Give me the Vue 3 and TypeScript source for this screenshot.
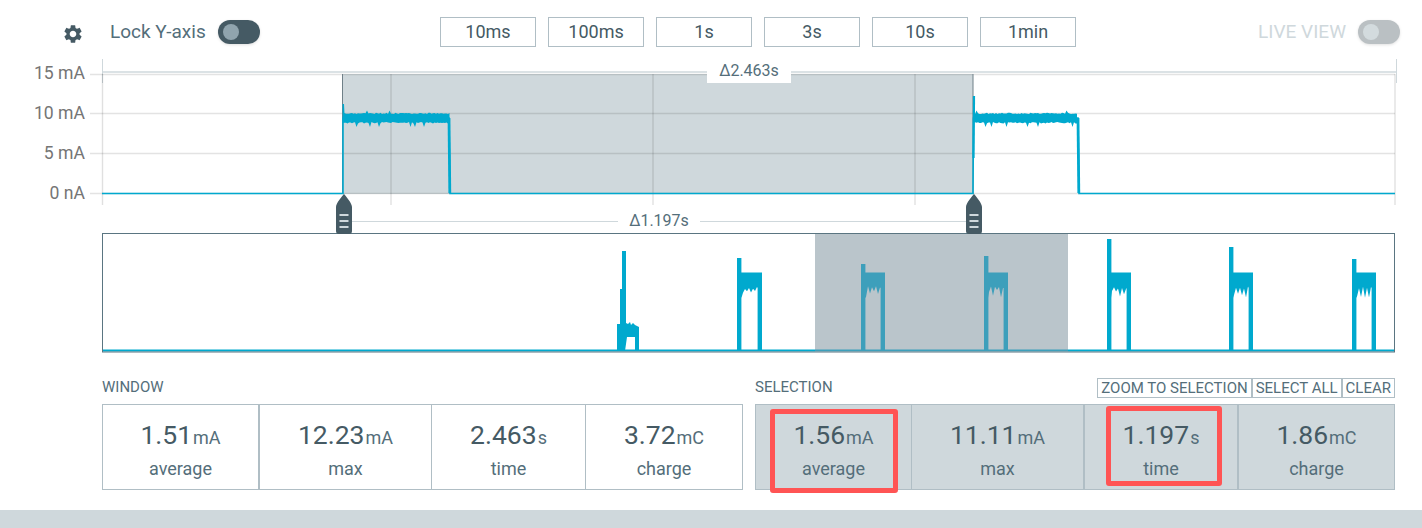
<script setup lang="ts">
interface Stat {
  value: string
  unit: string
  label: string
  thick?: boolean
  mark?: string
}

const windows = ['10ms', '100ms', '1s', '3s', '10s', '1min']

const windowStats: Stat[] = [
  { value: '1.51', unit: 'mA', label: 'average', thick: true },
  { value: '12.23', unit: 'mA', label: 'max' },
  { value: '2.463', unit: 's', label: 'time' },
  { value: '3.72', unit: 'mC', label: 'charge' },
]

const selectionStats: Stat[] = [
  { value: '1.56', unit: 'mA', label: 'average', mark: 'mark-average' },
  { value: '11.11', unit: 'mA', label: 'max', thick: true },
  { value: '1.197', unit: 's', label: 'time', thick: true, mark: 'mark-time' },
  { value: '1.86', unit: 'mC', label: 'charge' },
]

const gridY = [74.5, 113.5, 153.5, 193.5]
const gridX = [102.5, 391, 653, 915, 1395]
const axisLabels = [
  { y: 79, text: '15 mA' },
  { y: 119, text: '10 mA' },
  { y: 159, text: '5 mA' },
  { y: 199, text: '0 nA' },
]

// small seeded generator so the noise stays the same between runs
const noise = (seed: number) => {
  let s = seed
  return () => {
    s = (s * 9301 + 49297) % 233280
    return s / 233280
  }
}

const burst = (left: number, right: number, spike: number, seed: number) => {
  const rnd = noise(seed)
  const top: string[] = []
  const bottom: string[] = []
  for (let x = left + 2; x <= right; x += 1.5) {
    const up = rnd() > 0.95 ? 3.5 : rnd() * 1.2
    const down = rnd() > 0.94 ? 5 : rnd() * 1.6
    top.push(`${x},${114 - up}`)
    bottom.unshift(`${x},${122 + down}`)
  }
  return [`${left},${spike}`, `${left + 1.5},${spike}`, `${left + 2},114`, ...top, ...bottom, `${left},123`].join(' ')
}

const mainPulses = [
  { left: 342.5, right: 449.5, spike: 104, band: burst(342.5, 449.5, 104, 17) },
  { left: 973, right: 1078, spike: 96, band: burst(973, 1078, 96, 53) },
]

const miniPulse = (left: number, right: number, spike: number, seed: number) => {
  const rnd = noise(seed)
  const teeth: string[] = []
  for (let x = right - 5; x > left + 5; x -= 4) {
    teeth.push(`${x},${286 + rnd() * 3}`, `${x - 2},${289 + rnd() * 9}`)
  }
  return [
    `${left},351`, `${left},${spike}`, `${left + 4.4},${spike}`, `${left + 4.4},272.5`, `${right},272.5`,
    `${right},351`, `${right - 4.4},351`, `${right - 4.4},288`, ...teeth, `${left + 4.4},298`, `${left + 4.4},351`,
  ].join(' ')
}

const miniPulses = [
  { points: miniPulse(737, 762, 258, 3), selected: false },
  { points: miniPulse(861, 885, 264, 7), selected: true },
  { points: miniPulse(984, 1008, 256, 11), selected: true },
  { points: miniPulse(1107, 1131, 239, 19), selected: false },
  { points: miniPulse(1229, 1253, 247, 23), selected: false },
  { points: miniPulse(1352, 1376, 259, 29), selected: false },
]

const firstBurst =
  '617,351 617,324 620,324 620,289 622,289 622,251 626,251 626,323 628,324 630,322 631,325 633,323 635,325 639,327 639,351 635,351 635,337 627,337 625,351'

const handles = [344, 974]
</script>

<template>
  <div class="page">
    <div class="toolbar">
      <div class="lock">
        <svg class="gear" viewBox="0 0 24 24" width="22" height="22">
          <path fill="#455a64" d="M19.14 12.94c.04-.3.06-.61.06-.94 0-.32-.02-.64-.07-.94l2.03-1.58c.18-.14.23-.41.12-.61l-1.92-3.32c-.12-.22-.37-.29-.59-.22l-2.39.96c-.5-.38-1.03-.7-1.62-.94l-.36-2.54c-.04-.24-.24-.41-.48-.41h-3.84c-.24 0-.43.17-.47.41l-.36 2.54c-.59.24-1.13.57-1.62.94l-2.39-.96c-.22-.08-.47 0-.59.22L2.74 8.87c-.12.21-.08.47.12.61l2.03 1.58c-.05.3-.09.63-.09.94s.02.64.07.94l-2.03 1.58c-.18.14-.23.41-.12.61l1.92 3.32c.12.22.37.29.59.22l2.39-.96c.5.38 1.03.7 1.62.94l.36 2.54c.05.24.24.41.48.41h3.84c.24 0 .44-.17.47-.41l.36-2.54c.59-.24 1.13-.56 1.62-.94l2.39.96c.22.08.47 0 .59-.22l1.92-3.32c.12-.22.07-.47-.12-.61l-2.01-1.58zM12 15.6c-1.98 0-3.6-1.62-3.6-3.6s1.62-3.6 3.6-3.6 3.6 1.62 3.6 3.6-1.62 3.6-3.6 3.6z" />
        </svg>
        <span class="lock-text">Lock Y-axis</span>
        <span class="toggle"><span class="knob"></span></span>
      </div>
      <div class="windows">
        <button v-for="w in windows" :key="w" class="window-btn">{{ w }}</button>
      </div>
      <div class="live">
        <span class="live-text">LIVE VIEW</span>
        <span class="toggle off"><span class="knob"></span></span>
      </div>
    </div>

    <svg class="charts" viewBox="0 53 1422 300" width="1422" height="300">
      <!-- main chart -->
      <rect x="343" y="74" width="630" height="120" fill="#cfd8dc" />
      <line x1="102" y1="72" x2="1396" y2="72" stroke="#cfd8dc" stroke-width="1.4" />
      <line x1="102.5" y1="59" x2="102.5" y2="83" stroke="#cfd8dc" />
      <line x1="1396.5" y1="59" x2="1396.5" y2="83" stroke="#cfd8dc" />
      <line v-for="y in gridY" :key="y" x1="90" :y1="y" x2="1395" :y2="y" stroke="#000" stroke-opacity="0.11" stroke-width="1.4" />
      <line v-for="x in gridX" :key="x" :x1="x" y1="74" :x2="x" y2="205" stroke="#000" stroke-opacity="0.12" stroke-width="1.4" />
      <line x1="342.5" y1="74" x2="342.5" y2="194" stroke="#6f8088" />
      <line x1="973" y1="74" x2="973" y2="194" stroke="#6f8088" />
      <text v-for="a in axisLabels" :key="a.text" class="axis" x="85" :y="a.y" text-anchor="end">{{ a.text }}</text>

      <polyline
        points="102,193.5 343,193.5 343,118 449,118 450,193.5 973,193.5 973.5,118 1078,118 1079,193.5 1395,193.5"
        fill="none" stroke="#00a9ce" stroke-width="1.6"
      />
      <polygon v-for="p in mainPulses" :key="p.left" :points="p.band" fill="#00a9ce" />
      <line x1="449" y1="118" x2="449.8" y2="193" stroke="#00a9ce" stroke-width="2.8" />
      <line x1="1078" y1="118" x2="1078.8" y2="193" stroke="#00a9ce" stroke-width="2.8" />
      <line x1="974" y1="96" x2="973.5" y2="158" stroke="#00a9ce" stroke-width="2.2" />

      <rect x="707" y="64" width="84" height="19" fill="#fff" />
      <text class="delta" x="749" y="76" text-anchor="middle">Δ2.463s</text>

      <line x1="350" y1="221.5" x2="966" y2="221.5" stroke="#cfd8dc" />
      <rect x="618" y="212" width="82" height="19" fill="#fff" />
      <text class="delta" x="659" y="226" text-anchor="middle">Δ1.197s</text>

      <!-- overview chart -->
      <rect x="815" y="234" width="253" height="117" fill="#bac5cb" />
      <polygon :points="firstBurst" fill="#00a9ce" />
      <polyline points="103,350.5 815,350.5" stroke="#00a9ce" stroke-width="2.2" />
      <polyline points="815,350.5 1068,350.5" stroke="#3d9fbb" stroke-width="2.2" />
      <polyline points="1068,350.5 1394,350.5" stroke="#00a9ce" stroke-width="2.2" />
      <polygon
        v-for="p in miniPulses"
        :key="p.points"
        :points="p.points"
        :fill="p.selected ? '#3d9fbb' : '#00a9ce'"
      />
      <rect x="102.5" y="233.5" width="1292" height="118.5" fill="none" stroke="#5a7581" />

      <g v-for="h in handles" :key="h">
        <path
          :transform="`translate(${h} 194)`"
          fill="#455a64"
          d="M0 0 C2 2.5 8 9 8 13 V37 Q8 40 5 40 H-5 Q-8 40 -8 37 V13 C-8 9 -2 2.5 0 0Z"
        />
        <rect v-for="dy in [20, 26, 32]" :key="dy" :x="h - 4.5" :y="194 + dy" width="9" height="2" fill="#cfd8dc" />
      </g>
    </svg>

    <div class="stats">
      <section>
        <header class="stats-head"><span class="stats-title">WINDOW</span></header>
        <div class="cards cards-window">
          <div v-for="s in windowStats" :key="s.label" class="stat" :class="{ thick: s.thick }">
            <div class="stat-value">{{ s.value }}<span class="stat-unit">{{ s.unit }}</span></div>
            <div class="stat-label">{{ s.label }}</div>
          </div>
        </div>
      </section>
      <section>
        <header class="stats-head">
          <span class="stats-title">SELECTION</span>
          <div class="actions">
            <button class="action">ZOOM TO SELECTION</button>
            <button class="action">SELECT ALL</button>
            <button class="action">CLEAR</button>
          </div>
        </header>
        <div class="cards cards-selection">
          <div v-for="s in selectionStats" :key="s.label" class="stat" :class="{ thick: s.thick }">
            <div class="stat-value">{{ s.value }}<span class="stat-unit">{{ s.unit }}</span></div>
            <div class="stat-label">{{ s.label }}</div>
            <span v-if="s.mark" class="mark" :class="s.mark"></span>
          </div>
        </div>
      </section>
    </div>

    <div class="band"></div>
  </div>
</template>

<style scoped>
.page {
  width: 1422px;
  height: 528px;
  overflow: hidden;
  background: #fff;
  color: #455a64;
  font-family: Roboto, "Liberation Sans", sans-serif;
}

.toolbar {
  position: relative;
  z-index: 1;
  display: flex;
  align-items: center;
  height: 53px;
  padding: 10px 22px 0 62px;
  box-sizing: border-box;
  overflow: visible;
}

.lock {
  display: flex;
  align-items: center;
  width: 378px;
}

.gear {
  margin-top: 5px;
}

.lock-text {
  margin-left: 26px;
  font-size: 19px;
  color: #546e7a;
}

.toggle {
  display: flex;
  align-items: center;
  width: 42px;
  height: 24px;
  margin-left: 12px;
  padding-left: 5px;
  box-sizing: border-box;
  border-radius: 12px;
  background: #455a64;
  box-shadow: 0 1px 3px rgba(0, 0, 0, 0.12);
}

.knob {
  width: 16px;
  height: 16px;
  border-radius: 50%;
  background: #90a4ae;
}

.toggle.off {
  background: #bac0c3;
}

.toggle.off .knob {
  background: #d3dbde;
}

.windows {
  display: flex;
  gap: 12px;
}

.window-btn {
  width: 96px;
  height: 30px;
  padding: 0;
  border: 1px solid #b0bec5;
  background: #fff;
  color: #455a64;
  font-family: inherit;
  font-size: 18px;
}

.live {
  display: flex;
  align-items: center;
  margin-left: auto;
}

.live-text {
  font-size: 19px;
  color: #cfd8dc;
}

.charts {
  display: block;
}

.axis {
  font-family: Roboto, "Liberation Sans", sans-serif;
  font-size: 17.6px;
  fill: #757575;
}

.delta {
  font-family: Roboto, sans-serif;
  font-size: 16px;
  fill: #546e7a;
}

.stats {
  display: grid;
  grid-template-columns: 641px 640px;
  gap: 12px;
  padding-left: 102px;
}

.stats-head {
  display: flex;
  align-items: center;
  justify-content: space-between;
  height: 51px;
  padding: 25px 0 6px;
  box-sizing: border-box;
}

.stats-title {
  margin-top: -2px;
  font-size: 15px;
  color: #546e7a;
}

.actions {
  display: flex;
}

.action {
  height: 20px;
  padding: 0 3px;
  border: 1px solid #b0bec5;
  background: #fff;
  color: #546e7a;
  font-family: inherit;
  font-size: 15px;
  line-height: 18px;
  white-space: nowrap;
}

.cards {
  display: grid;
  height: 86px;
  border: 1px solid #b0bec5;
  box-sizing: border-box;
}

.cards-window {
  grid-template-columns: 157px 172px 154px 1fr;
}

.cards-selection {
  grid-template-columns: 156px 173px 154px 1fr;
  background: #cfd8dc;
}

.stat {
  position: relative;
  display: flex;
  flex-direction: column;
  align-items: center;
  padding-top: 12px;
  border-right: 1px solid #b0bec5;
}

.stat:last-child {
  border-right: 0;
}

.stat.thick {
  border-right-width: 2px;
}

.stat-value {
  font-size: 26.5px;
  line-height: 36px;
  color: #455a64;
}

.stat-unit {
  margin-left: 1px;
  font-size: 18px;
  color: #546e7a;
}

.stat-label {
  margin-top: 2px;
  font-size: 18px;
  line-height: 22px;
  color: #546e7a;
}

.mark {
  position: absolute;
  box-sizing: border-box;
  border: 5.5px solid #ff5454;
  border-radius: 3px;
}

.mark-average {
  left: 14px;
  top: 4px;
  width: 128px;
  height: 84px;
}

.mark-time {
  left: 21px;
  top: 1px;
  width: 116px;
  height: 80px;
}

.band {
  height: 18px;
  margin-top: 20px;
  background: #cfd8dc;
}
</style>
